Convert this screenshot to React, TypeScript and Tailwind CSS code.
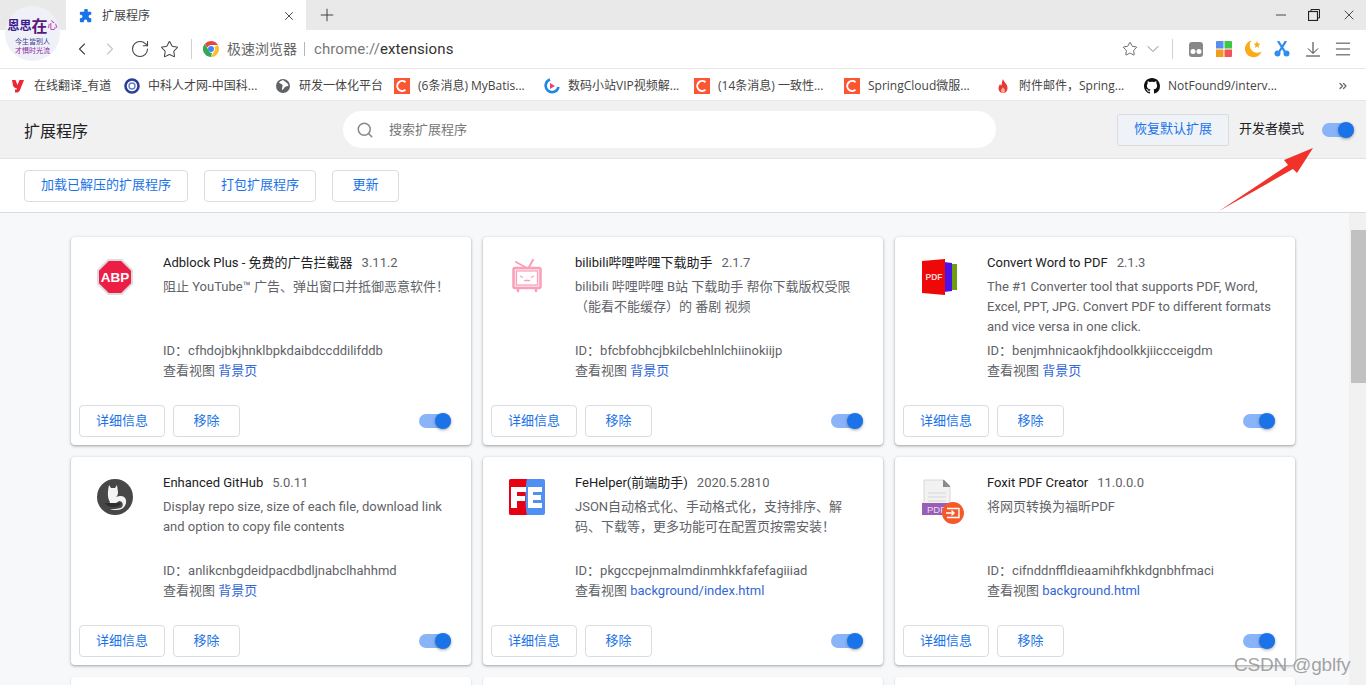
import { ChevronLeft, ChevronRight, RotateCw, Star, ChevronDown, Search, Plus, X, Minus, Menu, ChevronsRight } from 'lucide-react';
import type { ReactNode } from 'react';

const CSDN = () => (
  <div className="flex h-4 w-4 items-center justify-center bg-[#fc5531]">
    <svg viewBox="0 0 16 16" className="h-4 w-4">
      <path d="M11.5 4.2A5 5 0 1 0 11.5 11.8" fill="none" stroke="#fff" strokeWidth="2" />
    </svg>
  </div>
);

const bookmarks: { text: string; w: string; icon: ReactNode }[] = [
  {
    text: '在线翻译_有道',
    w: 'w-[114px]',
    icon: (
      <svg viewBox="0 0 16 16" className="h-4 w-4">
        <path d="M2 2h3.5l2 5 2-5H14L10 12c-.8 2-2.5 2.8-5 2.5v-3c1.3.2 1.9 0 2.2-.8C4.8 10 3.5 9 3 7.5z" fill="#ee2737" />
      </svg>
    ),
  },
  {
    text: '中科人才网-中国科...',
    w: 'w-[151px]',
    icon: (
      <svg viewBox="0 0 16 16" className="h-4 w-4">
        <circle cx="8" cy="8" r="6.5" fill="#fff" stroke="#2a3f94" strokeWidth="2.6" />
        <circle cx="8" cy="8" r="3" fill="none" stroke="#6b7cc0" strokeWidth="1.4" />
      </svg>
    ),
  },
  {
    text: '研发一体化平台',
    w: 'w-[119px]',
    icon: (
      <svg viewBox="0 0 16 16" className="h-4 w-4">
        <circle cx="8" cy="8" r="7" fill="#5f6368" />
        <path d="M8 2c-1 1-3 1-4 2.500 1 1.500 3 1 3.500 2.500C8 8.500 6.500 10 7 12c1.500-.5 2-2 3-3 1-.8 3-.5 3.500-1.500C13 5 10 4 8 2z" fill="#fff" />
      </svg>
    ),
  },
  { text: '(6条消息) MyBatis...', w: 'w-[150px]', icon: <CSDN /> },
  {
    text: '数码小站VIP视频解...',
    w: 'w-[150px]',
    icon: (
      <svg viewBox="0 0 16 16" className="h-4 w-4">
        <path d="M6 1.500A6.500 6.500 0 1 0 14.500 9" fill="none" stroke="#1e88e5" strokeWidth="2.600" />
        <path d="M6 5l5 3-5 3z" fill="#ec407a" />
      </svg>
    ),
  },
  { text: '(14条消息) 一致性...', w: 'w-[150px]', icon: <CSDN /> },
  { text: 'SpringCloud微服...', w: 'w-[151px]', icon: <CSDN /> },
  {
    text: '附件邮件\uFF0CSpring...',
    w: 'w-[149px]',
    icon: (
      <svg viewBox="0 0 16 16" className="h-4 w-4">
        <path d="M8 1c.5 3 4.500 4.500 4.500 9 0 3-2 5-4.500 5s-4.500-2-4.500-4.500c0-2 1-3 1.500-4.500.5 1 1 1.500 1.500 1.500C7 5 7 3 8 1z" fill="#e53935" />
        <path d="M8 9c.5 1.500 2 2 2 3.500S9 15 8 15s-2-1-2-2.500S7.500 10.500 8 9z" fill="#ffab91" />
      </svg>
    ),
  },
  {
    text: 'NotFound9/interv...',
    w: 'w-[170px]',
    icon: (
      <svg viewBox="0 0 16 16" className="h-4 w-4">
        <path
          fill="#111"
          d="M8 0C3.58 0 0 3.58 0 8c0 3.540 2.290 6.530 5.470 7.590.4.070.55-.170.55-.380 0-.190-.010-.820-.010-1.490-2.010.370-2.530-.490-2.690-.940-.090-.230-.480-.940-.820-1.130-.280-.150-.680-.520-.010-.530.630-.010 1.080.580 1.230.820.720 1.210 1.870.870 2.330.660.070-.520.280-.870.510-1.070-1.780-.200-3.640-.890-3.640-3.950 0-.870.310-1.590.820-2.150-.080-.200-.360-1.020.080-2.120 0 0 .670-.210 2.200.820.640-.180 1.320-.270 2-.270s1.360.090 2 .270c1.530-1.040 2.200-.820 2.200-.820.440 1.100.160 1.920.080 2.120.510.560.820 1.270.820 2.150 0 3.070-1.870 3.750-3.650 3.950.290.250.540.730.540 1.480 0 1.070-.010 1.930-.010 2.200 0 .210.150.460.550.380A8.010 8.010 0 0 0 16 8c0-4.420-3.580-8-8-8z"
        />
      </svg>
    ),
  },
];

const Toggle = () => (
  <div className="relative h-[14px] w-[32px] rounded-full bg-[#8ab4f8]">
    <div className="absolute right-0 top-[-1px] h-4 w-4 rounded-full bg-[#1a73e8] shadow-[0_1px_3px_rgba(60,64,67,0.5)]" />
  </div>
);

const ABPIcon = () => (
  <svg viewBox="0 0 36 36" className="h-9 w-9">
    <path d="M11 0h14l11 11v14L25 36H11L0 25V11z" fill="#dcdcdc" />
    <path d="M11.800 2h12.400L34 11.800v12.400L24.200 34H11.800L2 24.200V11.800z" fill="#ed1e45" />
    <text x="18" y="23" textAnchor="middle" fontSize="13.500" fontWeight="700" fill="#fff" fontFamily="Liberation Sans, sans-serif">ABP</text>
  </svg>
);

const BiliIcon = () => (
  <svg viewBox="0 0 36 36" className="h-9 w-9" fill="none" stroke="#fb9fb8">
    <path d="M7 3l9 5M24 1l-4 7" strokeWidth="2" strokeLinecap="round" />
    <rect x="4.500" y="9" width="27" height="20" rx="1.500" strokeWidth="2.500" fill="#ffe6ed" />
    <rect x="7.500" y="12" width="21" height="14" fill="#fff" strokeWidth="1.200" />
    <path d="M11 17l3 1.500M25 17l-3 1.500M15 21q1.500 1.500 3 0q1.500 1.500 3 0" strokeWidth="1.200" />
    <path d="M9 30v2M27 30v2" strokeWidth="2.500" strokeLinecap="round" />
  </svg>
);

const PdfIcon = () => (
  <svg viewBox="0 0 36 36" className="h-9 w-9">
    <path d="M29 5h7v26h-7z" fill="#6d9e12" />
    <path d="M23 3l8 1v28l-8 1z" fill="#4a12e8" />
    <path d="M1 2l23-2v36L1 34z" fill="#ee0808" />
    <text x="13" y="21" textAnchor="middle" fontSize="8.500" fontWeight="700" fill="#ffd6d6" fontFamily="Liberation Sans, sans-serif">PDF</text>
  </svg>
);

const CatIcon = () => (
  <svg viewBox="0 0 36 36" className="h-9 w-9">
    <circle cx="18" cy="18" r="18" fill="#474747" />
    <path d="M12 6l2 3h4l2-3 1 7c0 3-1 4-2 5 5-2 9-1 10 3 1 5-3 10-9 10h-7c2-1 10-1 12-3 2-3 0-6-3-6-2 2-5 3-8 3h-2l1-2c-2-3-3-8-1-17z" fill="#f4f4f4" />
    <path d="M8 24h16c-1 3-4 4-8 4s-7-2-8-4z" fill="#2e2e2e" />
  </svg>
);

const FeIcon = () => (
  <svg viewBox="0 0 36 36" className="h-9 w-9">
    <rect width="36" height="36" rx="2" fill="#4f90f2" />
    <path d="M2 0h16c-2 6-2 30 0 36H2a2 2 0 0 1-2-2V2a2 2 0 0 1 2-2z" fill="#e60012" />
    <path d="M2 8h15v5H8v4h8v5H8v7H2z" fill="#fff" />
    <path d="M19 8h14v5H24v3h8v5h-8v3h9v5H19z" fill="#fff" />
  </svg>
);

const FoxitIcon = () => (
  <svg viewBox="0 0 44 46" className="h-[46px] w-[44px]">
    <path d="M3 1h20l6 6v26H3z" fill="#f2f2f2" stroke="#d8d8d8" />
    <path d="M23 1l6 6v1h-7V1z" fill="#8a8a8a" />
    <path d="M7 14h18M7 18h18M7 22h18" stroke="#d5d5d5" strokeWidth="1.200" />
    <rect x="1" y="24" width="30" height="12" fill="#9a5fb5" />
    <text x="6" y="34" fontSize="9.500" fill="#e9dcef" fontFamily="Liberation Sans, sans-serif">PDF</text>
    <circle cx="32" cy="34" r="11" fill="#f4592a" />
    <path d="M26 29.500h12v9H26M25 34h8m-2.500-2.500L33 34l-2.500 2.500" fill="none" stroke="#fff" strokeWidth="1.400" />
  </svg>
);

const cards = [
  { name: 'Adblock Plus - 免费的广告拦截器', ver: '3.11.2', desc: '阻止 YouTube™ 广告、弹出窗口并抵御恶意软件\uFF01', id: 'cfhdojbkjhnklbpkdaibdccddilifddb', view: '背景页', icon: <ABPIcon /> },
  { name: 'bilibili哔哩哔哩下载助手', ver: '2.1.7', desc: 'bilibili 哔哩哔哩 B站 下载助手 帮你下载版权受限\uFF08能看不能缓存\uFF09的 番剧 视频', id: 'bfcbfobhcjbkilcbehlnlchiinokiijp', view: '背景页', icon: <BiliIcon /> },
  { name: 'Convert Word to PDF', ver: '2.1.3', desc: 'The #1 Converter tool that supports PDF, Word, Excel, PPT, JPG. Convert PDF to different formats and vice versa in one click.', id: 'benjmhnicaokfjhdoolkkjiiccceigdm', view: '背景页', icon: <PdfIcon /> },
  { name: 'Enhanced GitHub', ver: '5.0.11', desc: 'Display repo size, size of each file, download link and option to copy file contents', id: 'anlikcnbgdeidpacdbdljnabclhahhmd', view: '背景页', icon: <CatIcon /> },
  { name: 'FeHelper(前端助手)', ver: '2020.5.2810', desc: 'JSON自动格式化、手动格式化\uFF0C支持排序、解码、下载等\uFF0C更多功能可在配置页按需安装\uFF01', id: 'pkgccpejnmalmdinmhkkfafefagiiiad', view: 'background/index.html', icon: <FeIcon /> },
  { name: 'Foxit PDF Creator', ver: '11.0.0.0', desc: '将网页转换为福昕PDF', id: 'cifnddnffldieaamihfkhkdgnbhfmaci', view: 'background.html', icon: <FoxitIcon /> },
];

const Card = ({ c }: { c: (typeof cards)[number] }) => (
  <div className="flex h-[208px] flex-col rounded-[4px] bg-white shadow-[0_1px_2px_rgba(60,64,67,0.3),0_1px_3px_1px_rgba(60,64,67,0.15)]">
    <div className="flex h-[168px] pl-[26px] pt-[16px]">
      <div className="w-[66px] pt-[6px]">{c.icon}</div>
      <div className="w-[292px] text-[13px] leading-5 text-[#5f6368]">
        <div className="flex gap-[9px]">
          <span className="text-[#202124]">{c.name}</span>
          <span>{c.ver}</span>
        </div>
        <p className="mt-1 h-[60px]">{c.desc}</p>
        <div className="mt-1">ID{'\uFF1A'}{c.id}</div>
        <div>
          查看视图 <span className="text-[#3367d6]">{c.view}</span>
        </div>
      </div>
    </div>
    <div className="flex items-center px-2">
      <button className="h-8 w-[86px] rounded-[4px] border border-[#dadce0] text-[13px] text-[#1a73e8]">详细信息</button>
      <button className="ml-2 h-8 w-[67px] rounded-[4px] border border-[#dadce0] text-[13px] text-[#1a73e8]">移除</button>
      <div className="ml-auto mr-[12px]">
        <Toggle />
      </div>
    </div>
  </div>
);

export default function App() {
  return (
    <div className="relative flex h-[685px] w-[1366px] flex-col overflow-hidden bg-white font-['Roboto','Noto_Sans_CJK_SC',sans-serif]">
      {/* tab strip */}
      <div className="flex h-[30px] shrink-0 items-center bg-[#e9e9e9] pl-[66px]">
        <div className="flex h-full w-[240px] items-center bg-white pl-[13px] pr-[10px] pt-[1px]">
          <svg viewBox="0 0 16 16" className="h-[14px] w-[14px]">
            <path d="M6 1.500a2 2 0 0 1 4 0V3h3a1 1 0 0 1 1 1v2.500h-1a2 2 0 0 0 0 4h1V14a1 1 0 0 1-1 1H9.500v-1a2 2 0 0 0-4 0v1H2a1 1 0 0 1-1-1V10.500h1a2 2 0 0 0 0-4H1V4a1 1 0 0 1 1-1h4z" fill="#1a73e8" />
          </svg>
          <span className="ml-[9px] text-xs text-[#444]">扩展程序</span>
          <X className="ml-auto h-[14px] w-[14px] text-[#333]" strokeWidth={1.5} />
        </div>
        <Plus className="ml-[11px] h-5 w-5 text-[#333]" strokeWidth={1.1} />
        <div className="ml-auto flex items-center text-[#222]">
          <Minus className="h-[16px] w-[16px]" strokeWidth={1.2} />
          <svg viewBox="0 0 12 12" className="ml-[19px] h-3 w-3" fill="none" stroke="#222">
            <rect x="0.500" y="2.500" width="9" height="9" strokeWidth="1.200" />
            <path d="M3 2.500V.500h8.500V9H9.500" />
          </svg>
          <X className="ml-[21px] mr-[9px] h-[16px] w-[16px]" strokeWidth={1.2} />
        </div>
      </div>

      {/* address bar */}
      <div className="flex h-[39px] shrink-0 items-center border-b border-[#e6e6e6] pl-[72px]">
        <ChevronLeft className="h-5 w-5 text-[#444]" strokeWidth={1.300} />
        <ChevronRight className="ml-2 h-5 w-5 text-[#c4c4c4]" strokeWidth={1.300} />
        <RotateCw className="ml-[10px] h-5 w-5 text-[#444]" strokeWidth={1.300} />
        <Star className="ml-[10px] h-[19px] w-[19px] text-[#444]" strokeWidth={1.300} />
        <div className="ml-[12px] h-5 w-px bg-[#d0d0d0]" />
        <svg viewBox="0 0 16 16" className="ml-[11px] h-4 w-4">
          <path d="M8 0a8 8 0 0 1 6.930 4H8a4 4 0 0 0-3.700 2.500L1.900 2.800A8 8 0 0 1 8 0z" fill="#e8453c" />
          <path d="M14.930 4A8 8 0 0 1 8 16l3.400-5.900A4 4 0 0 0 11.400 6z" fill="#fbc02d" />
          <path d="M8 16A8 8 0 0 1 1.900 2.800l3.400 5.900A4 4 0 0 0 9 11.900z" fill="#34a853" />
          <circle cx="8" cy="8" r="3" fill="#4285f4" />
        </svg>
        <span className="ml-2 text-sm text-[#666]">极速浏览器</span>
        <div className="ml-[7px] h-[14px] w-px bg-[#b5b5b5]" />
        <span className="ml-[9px] text-[15px] tracking-[0.1px] text-[#777]">
          chrome://<span className="text-[#333]">extensions</span>
        </span>
        <div className="ml-auto flex items-center text-[#555]">
          <Star className="h-[16px] w-[16px]" strokeWidth={1.300} />
          <ChevronDown className="ml-[5px] h-5 w-5 text-[#777]" strokeWidth={1.100} />
          <div className="ml-[9px] h-5 w-px bg-[#d0d0d0]" />
          <svg viewBox="0 0 16 16" className="ml-[15px] h-4 w-4">
            <path d="M4 1h8a3 3 0 0 1 3 3v9a3 3 0 0 1-3 3H4a3 3 0 0 1-3-3V4a3 3 0 0 1 3-3z" fill="#888" />
            <circle cx="5" cy="10.500" r="2.500" fill="#fff" />
            <circle cx="11" cy="10.500" r="2.500" fill="#fff" />
          </svg>
          <svg viewBox="0 0 16 16" className="ml-[12px] h-4 w-4">
            <path d="M1 0h6.500v7.500H0V1a1 1 0 0 1 1-1z" fill="#5b8def" />
            <path d="M8.500 0H15a1 1 0 0 1 1 1v6.500H8.500z" fill="#3ec64a" />
            <path d="M0 8.500h7.500V16H0z" fill="#f29b1d" />
            <path d="M8.500 8.500H16V15a1 1 0 0 1-1 1H8.500z" fill="#f25555" />
          </svg>
          <svg viewBox="0 0 18 18" className="ml-[12px] h-[18px] w-[18px]">
            <path d="M7.500 0.500A8.500 8.500 0 1 0 17.500 11.500 7.500 7.500 0 0 1 7.500 0.500z" fill="#fbab18" />
            <path d="M13 1l1 2.500 2.500.2-2 1.700.7 2.600-2.200-1.400-2.200 1.400.7-2.600-2-1.700 2.500-.2z" fill="#fbab18" />
          </svg>
          <svg viewBox="0 0 16 16" className="ml-[12px] h-4 w-4">
            <path d="M4 0l7 11M12 0L5 11" stroke="#2f8df0" strokeWidth="2.300" />
            <circle cx="3.500" cy="12.500" r="3" fill="#2f8df0" />
            <circle cx="12.500" cy="12.500" r="3" fill="#2f8df0" />
          </svg>
          <svg viewBox="0 0 16 16" className="ml-[15px] h-4 w-4" fill="none" stroke="#333" strokeWidth="1">
            <path d="M8 1v11M3 7.500L8 12.500l5-5M1 15h14" />
          </svg>
          <Menu className="ml-[12px] mr-[13px] h-5 w-5 text-[#333]" strokeWidth={1.100} />
        </div>
      </div>

      {/* bookmarks */}
      <div className="flex h-[32px] shrink-0 items-center border-b border-[#e6e6e6] pl-[10px] pt-[3px] font-['Open_Sans','Noto_Sans_CJK_SC',sans-serif] text-xs text-[#444]">
        {bookmarks.map((b) => (
          <div key={b.text} className={`flex shrink-0 items-center gap-[8px] ${b.w}`}>
            <div className="shrink-0">{b.icon}</div>
            <span className="whitespace-nowrap">{b.text}</span>
          </div>
        ))}
        <ChevronsRight className="ml-[23px] h-3 w-3 text-[#666]" strokeWidth={2.500} />
      </div>

      {/* extensions toolbar */}
      <div className="flex h-[58px] shrink-0 items-center border-b border-[#e3e3e3] bg-[#f1f1f1] pl-6">
        <h1 className="mt-[4px] w-[319px] text-base text-[#202124]">扩展程序</h1>
        <div className="flex h-[37px] w-[653px] items-center rounded-full bg-white pl-[13px]">
          <Search className="h-[18px] w-[18px] text-[#888]" strokeWidth={2} />
          <span className="ml-[15px] text-[13px] text-[#777]">搜索扩展程序</span>
        </div>
        <button className="ml-[121px] h-8 w-[112px] rounded-[2px] border border-[#dadce0] bg-[#eff3f8] pb-[2px] text-[13px] text-[#1a73e8]">恢复默认扩展</button>
        <span className="mb-[2px] ml-[10px] text-[13px] text-[#202124]">开发者模式</span>
        <div className="ml-[18px]">
          <Toggle />
        </div>
      </div>

      {/* dev buttons */}
      <div className="flex h-[54px] shrink-0 items-center gap-4 border-b border-[#dadce0] px-6">
        <button className="h-8 w-[164px] rounded-[4px] border border-[#dadce0] pb-[2px] text-[13px] text-[#1a73e8]">加载已解压的扩展程序</button>
        <button className="h-8 w-[112px] rounded-[4px] border border-[#dadce0] pb-[2px] text-[13px] text-[#1a73e8]">打包扩展程序</button>
        <button className="h-8 w-[67px] rounded-[4px] border border-[#dadce0] pb-[2px] text-[13px] text-[#1a73e8]">更新</button>
      </div>

      {/* list */}
      <div className="flex min-h-0 flex-1 bg-[#f7f8fa]">
        <div className="flex-1 overflow-hidden pl-[71px] pt-6">
          <div className="grid grid-cols-[400px_400px_400px] gap-3">
            {cards.map((c) => (
              <Card key={c.id} c={c} />
            ))}
            <div className="h-[208px] rounded-[4px] bg-white shadow-[0_1px_2px_rgba(60,64,67,0.3)]" />
            <div className="h-[208px] rounded-[4px] bg-white shadow-[0_1px_2px_rgba(60,64,67,0.3)]" />
            <div className="h-[208px] rounded-[4px] bg-white shadow-[0_1px_2px_rgba(60,64,67,0.3)]" />
          </div>
        </div>
        <div className="w-[17px] shrink-0 bg-[#f1f1f1] pl-[2px] pt-[17px]">
          <div className="h-[153px] bg-[#c1c1c1]" />
        </div>
      </div>

      {/* avatar sits over tab strip and address bar */}
      <div className="absolute left-[5px] top-[6px] flex h-[55px] w-[55px] flex-col items-center overflow-hidden rounded-full bg-[#f0f1f8] pt-[9px] font-['Noto_Sans_CJK_SC',sans-serif]">
        <div className="flex items-end whitespace-nowrap font-bold leading-[20px] text-[#3d1a8c]">
          <span className="text-[12px]">恩思</span>
          <span className="text-[16px] text-[#5a1a7c]">在</span>
          <span className="text-[10px] font-normal text-[#b0209c]">心</span>
        </div>
        <span className="mt-[2px] whitespace-nowrap text-[7px] leading-[9px] text-[#3a3a8c]">今生皆别人</span>
        <span className="whitespace-nowrap text-[7px] leading-[9px] text-[#8a2a9c]">才惧时光流</span>
      </div>

      {/* red annotation arrow */}
      <svg className="absolute left-[1215px] top-[145px] h-[70px] w-[102px]" viewBox="0 0 102 70">
        <path d="M4 66L73 20 69 15 98 3 82 28 78 24z" fill="#f0322a" />
      </svg>

      <div className="absolute left-[1234px] top-[651px] font-['Liberation_Sans',sans-serif] text-[19px] leading-7 tracking-[-0.2px] text-[#8c8c8c]/80">CSDN @gblfy</div>
    </div>
  );
}
